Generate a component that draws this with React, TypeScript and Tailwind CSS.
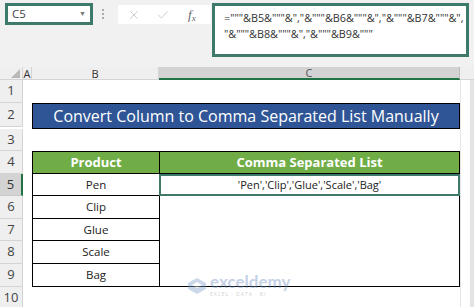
import { Check, X } from "lucide-react";

const rows = ["Pen", "Clip", "Glue", "Scale", "Bag"];
const rowHeights = [23, 24, 22, 23, 22, 23, 22, 23, 23, 22];

function RowHead({ n, active }: { n: number; active?: boolean }) {
  return (
    <div
      className={
        active
          ? "flex items-center justify-center border-b border-r-2 border-b-[#c8c8c8] border-r-[#217346] bg-[#d3d3d3] text-[13px] text-[#333]"
          : "flex items-center justify-center border-b border-r border-[#d4d4d4] bg-[#efefef] text-[13px] text-[#444]"
      }
    >
      {n}
    </div>
  );
}

export default function App() {
  return (
    <div className="relative h-[307px] w-[474px] overflow-hidden bg-white font-['Open_Sans',sans-serif]">
      {/* ribbon / formula bar */}
      <div className="flex h-[67px] items-start gap-0 bg-[#f1f1f1] pl-[5px] pt-[3px]">
        <div className="flex h-[22px] w-[88px] items-center justify-between border-[3px] border-[#3d7a6c] bg-white px-[4px] text-[11.5px] text-[#444]">
          <span>C5</span>
          <span className="text-[7px] text-[#777]">▼</span>
        </div>
        <div className="ml-[9px] mt-[6px] flex flex-col gap-[2px]">
          <span className="h-[2px] w-[2px] bg-[#aaa]" />
          <span className="h-[2px] w-[2px] bg-[#aaa]" />
          <span className="h-[2px] w-[2px] bg-[#aaa]" />
        </div>
        <div className="ml-[14px] mt-[2px] flex h-[19px] w-[93px] items-center bg-white pl-[9px] text-[#bbb]">
          <X size={14} strokeWidth={1.3} />
          <Check size={14} strokeWidth={1.3} className="ml-[15px]" />
          <span className="ml-[18px] font-['Liberation_Serif',serif] text-[13px] italic text-[#666]">
            f<sub className="text-[9px]">x</sub>
          </span>
        </div>
        <div className="ml-[1px] h-[54px] w-[257px] border-[3px] border-[#3d7a6c] bg-white pl-[9px] pt-[4px] text-[10.8px] leading-[16px] text-[#333]">
          ="""&amp;B5&amp;"""&amp;","&amp;"""&amp;B6&amp;"""&amp;","&amp;"""&amp;B7&amp;"""&amp;",
          <br />
          "&amp;"""&amp;B8&amp;"""&amp;","&amp;"""&amp;B9&amp;"""
        </div>
      </div>

      {/* sheet grid */}
      <div className="grid grid-cols-[23px_9px_127px_301px_14px]">
        {/* column headers */}
        <div className="relative h-[13px] border-b border-r border-[#d4d4d4] bg-[#efefef]">
          <div className="absolute bottom-[1px] right-[2px] h-0 w-0 border-b-[9px] border-l-[9px] border-b-[#b8b8b8] border-l-transparent" />
        </div>
        <div className="flex items-center justify-center border-b border-r border-[#d4d4d4] bg-[#efefef] text-[11px] leading-none text-[#333]">
          A
        </div>
        <div className="flex items-center justify-center border-b border-r border-[#d4d4d4] bg-[#efefef] text-[11px] leading-none text-[#333]">
          B
        </div>
        <div className="flex items-center justify-center border-b-2 border-r border-b-[#217346] border-r-[#bbb] bg-[#d3d3d3] text-[11px] leading-none text-[#555]">
          C
        </div>
        <div className="border-b border-[#d4d4d4] bg-[#efefef]" />

        {/* body rows */}
        {rowHeights.map((h, i) => {
          const n = i + 1;
          return (
            <div key={n} className="contents">
              <div style={{ height: h }} className="grid">
                <RowHead n={n} active={n === 5} />
              </div>
              <div />
              {n === 2 && (
                <div className="col-span-2 flex items-center justify-center border border-black bg-[#2f5597] text-[16px] text-white">
                  Convert Column to Comma Separated List Manually
                </div>
              )}
              {n === 4 && (
                <>
                  <div className="flex items-center justify-center border border-r-0 border-black bg-[#70ad47] text-[13px] font-bold text-white">
                    Product
                  </div>
                  <div className="flex items-center justify-center border border-black bg-[#70ad47] text-[13px] font-bold text-white">
                    Comma Separated List
                  </div>
                </>
              )}
              {n >= 5 && n <= 9 && (
                <>
                  <div className="flex items-center justify-center border-b border-l border-black text-[11.5px] text-[#222]">
                    {rows[n - 5]}
                  </div>
                  {n === 5 ? (
                    <div className="flex items-center justify-center border-[2px] border-[#3d7a6c] text-[11px] text-[#222]">
                      'Pen','Clip','Glue','Scale','Bag'
                    </div>
                  ) : (
                    <div
                      className={
                        n === 9
                          ? "border-b border-l border-r border-black"
                          : "border-l border-r border-black"
                      }
                    />
                  )}
                </>
              )}
              {(n === 1 || n === 3 || n === 10) && (
                <>
                  <div />
                  <div />
                </>
              )}
              <div className="border-l border-[#e5e5e5] bg-white">
                <div className="ml-auto h-full w-[4px] bg-[#e4e4e4]" />
              </div>
            </div>
          );
        })}
      </div>

      {/* watermark */}
      <div className="absolute left-[188px] top-[274px] flex items-center gap-[4px] opacity-40">
        <svg width="18" height="16" viewBox="0 0 18 16">
          <path d="M9 0 L18 5 L18 11 L9 16 L0 11 L0 5 Z" fill="#7f9fc9" />
          <path d="M9 4 L14 7 L9 10 L4 7 Z" fill="#fff" />
        </svg>
        <div className="flex flex-col gap-[2px]">
          <span className="font-['Lato',sans-serif] text-[17px] font-bold leading-[15px] text-[#6f8fbf]">exceldemy</span>
          <span className="text-[5px] leading-[6px] tracking-[1px] text-[#8a8a8a]">EXCEL · DATA · BI</span>
        </div>
      </div>
    </div>
  );
}
